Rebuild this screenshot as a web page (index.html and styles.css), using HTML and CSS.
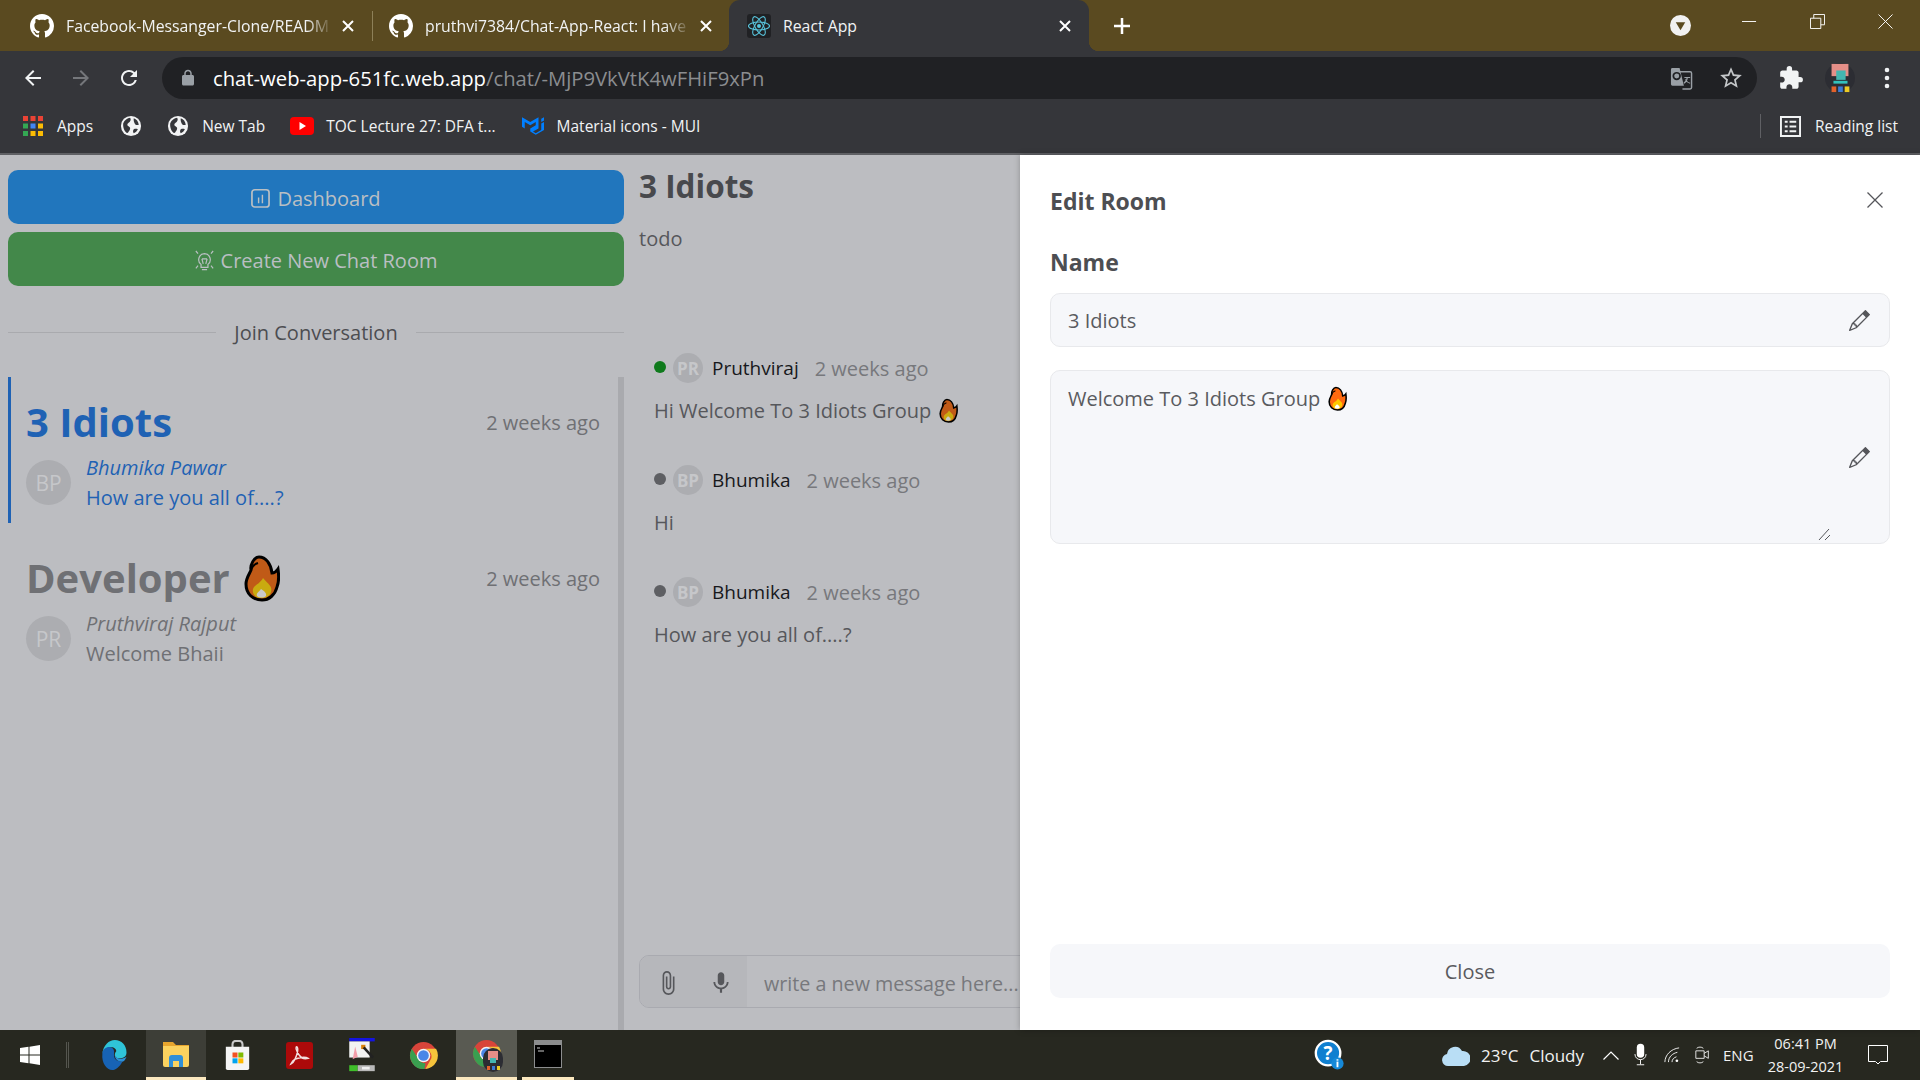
FILE: index.html
```html
<!DOCTYPE html>
<html lang="en">
<head>
  <meta charset="UTF-8" />
  <title>React App</title>
  <link rel="stylesheet" href="styles.css">
</head>
<body>
  <!-- shared icons -->
  <svg class="sprite" aria-hidden="true">
    <symbol id="i-github" viewBox="0 0 16 16"><path fill="currentColor" d="M8 0C3.58 0 0 3.58 0 8c0 3.54 2.29 6.53 5.47 7.59.4.07.55-.17.55-.38 0-.19-.01-.82-.01-1.49-2.01.37-2.53-.49-2.69-.94-.09-.23-.48-.94-.82-1.13-.28-.15-.68-.52-.01-.53.63-.01 1.08.58 1.23.82.72 1.21 1.87.87 2.33.66.07-.52.28-.87.51-1.07-1.78-.2-3.64-.89-3.64-3.95 0-.87.31-1.59.82-2.15-.08-.2-.36-1.02.08-2.12 0 0 .67-.21 2.2.82.64-.18 1.32-.27 2-.27.68 0 1.36.09 2 .27 1.53-1.04 2.2-.82 2.2-.82.44 1.1.16 1.92.08 2.12.51.56.82 1.27.82 2.15 0 3.07-1.87 3.75-3.65 3.95.29.25.54.73.54 1.48 0 1.07-.01 1.93-.01 2.2 0 .21.15.46.55.38A8.013 8.013 0 0016 8c0-4.42-3.58-8-8-8z"/></symbol>
    <symbol id="i-x" viewBox="0 0 14 14"><path d="M2 2l10 10M12 2L2 12" stroke="currentColor" stroke-width="2" fill="none"/></symbol>
    <symbol id="i-globe" viewBox="0 0 24 24"><circle cx="12" cy="12" r="11" fill="#f2f3f4"/><path fill="#35363a" d="M3.5 9C5 5.500 8 3.500 11 3c1 1.500 1 3-.5 4.500-1 1-2.500 1.500-2.500 3 0 1.500 2.500 2 3 3.500.3 1.500-.5 3-1.500 4-.5 1-1 2-2 1.500C5 18 3 14 3.500 9zM15 3.500c3 1 5 3.500 5.500 7-1.500 1-3 .5-4-.5-1-1.500-2-4-1.500-6.500zM15 15.500c1.500-.5 3-.5 4.500 0-1 2-2.500 3.500-4.500 4.500-1-1.500-1-3 0-4.500z"/></symbol>
    <symbol id="i-back" viewBox="0 0 24 24"><path fill="currentColor" d="M20 11H7.830l5.590-5.590L12 4l-8 8 8 8 1.410-1.410L7.830 13H20v-2z"/></symbol>
    <symbol id="i-pencil" viewBox="0 0 16 16"><path fill="currentColor" d="M12.146.146a.5.5 0 0 1 .708 0l3 3a.5.5 0 0 1 0 .708l-10 10a.5.5 0 0 1-.168.11l-5 2a.5.5 0 0 1-.65-.65l2-5a.5.5 0 0 1 .11-.168l10-10zM12.793 5.500 10.500 3.207 4 9.707V10h.5a.5.5 0 0 1 .5.5v.5h.5a.5.5 0 0 1 .5.5v.5h.293l6.500-6.500zm-9.761 5.175-.106.106-1.528 3.821 3.821-1.528.106-.106A.5.5 0 0 1 5 12.500V12h-.5a.5.5 0 0 1-.5-.5V11h-.5a.5.5 0 0 1-.468-.325z"/><path fill="currentColor" d="M12.500.5l3 3-2 2-3-3z"/></symbol>
    <symbol id="i-fire" viewBox="0 0 36 48">
      <path fill="var(--flame)" stroke="#000" stroke-width="3" d="M15 3C22 3 27 10 28 19C30 19 32 18 34 15C35 22 35 28 33 33C31 41 25 46 18 46C9 46 2 40 2 30C2 24 6 19 7 16C6 11 10 3 15 3Z"/>
      <path fill="none" stroke="#000" stroke-width="2" d="M7 16C8 12 11 10 14 9"/>
      <path fill="var(--flame-in)" d="M19 24C23 29 29 32 27 38C26 42 22 44 17 44C11 44 8 40 9 35C10 31 16 30 19 24Z"/>
      <path fill="var(--flame-core)" d="M17 35C20 37 23 39 22 42C20 44 15 44 13 42C12 39 15 38 17 35Z"/>
    </symbol>
    <symbol id="i-mic" viewBox="0 0 24 24"><path fill="currentColor" d="M12 14c1.660 0 3-1.340 3-3V5c0-1.660-1.340-3-3-3S9 3.340 9 5v6c0 1.660 1.340 3 3 3zm5.300-3c0 3-2.540 5.100-5.300 5.100S6.700 14 6.700 11H5c0 3.410 2.720 6.230 6 6.720V21h2v-3.280c3.280-.48 6-3.300 6-6.720h-1.700z"/></symbol>
    <symbol id="i-chrome" viewBox="0 0 30 30">
      <circle cx="15" cy="15" r="14" fill="#d8443a"/>
      <path fill="#f5c33b" d="M15 8h13a14 14 0 0 1-11 21l6-11a8 8 0 0 0-8-10z"/>
      <path fill="#3a9f50" d="M3 8l7 11a8 8 0 0 0 7 4l-1 6A14 14 0 0 1 3 8z"/>
      <circle cx="15" cy="15" r="7" fill="#f4f4f4"/><circle cx="15" cy="15" r="5.500" fill="#4a86e8"/>
    </symbol>
  </svg>

  <div class="screen">
    <div class="tabstrip">
      <div class="tab tab-first">
        <svg class="favicon"><use href="#i-github"/></svg>
        <span class="tab-title fade">Facebook-Messanger-Clone/READM</span>
        <svg class="tab-x"><use href="#i-x"/></svg>
      </div>
      <div class="tab-sep"></div>
      <div class="tab tab-second">
        <svg class="favicon"><use href="#i-github"/></svg>
        <span class="tab-title fade">pruthvi7384/Chat-App-React: I have</span>
        <svg class="tab-x"><use href="#i-x"/></svg>
      </div>
      <div class="tab tab-active">
        <svg class="react-icon" viewBox="0 0 24 24">
          <rect width="24" height="24" rx="3" fill="#202124"/>
          <g fill="none" stroke="#58c4dc" stroke-width="1.100">
            <ellipse cx="12" cy="12" rx="10.500" ry="4"/>
            <ellipse cx="12" cy="12" rx="10.500" ry="4" transform="rotate(60 12 12)"/>
            <ellipse cx="12" cy="12" rx="10.500" ry="4" transform="rotate(120 12 12)"/>
          </g>
          <circle cx="12" cy="12" r="2" fill="#58c4dc"/>
        </svg>
        <span class="tab-title">React App</span>
        <svg class="tab-x"><use href="#i-x"/></svg>
      </div>
      <svg class="new-tab" viewBox="0 0 18 18"><path d="M9 1v16M1 9h16" stroke="#fff" stroke-width="2.500"/></svg>
      <svg class="tab-search" viewBox="0 0 20 20"><circle cx="10" cy="10" r="10" fill="#f1f1f1"/><path d="M5.500 7h9L10 14.500z" fill="#5a4a20"/></svg>
      <div class="win-btns">
        <svg viewBox="0 0 16 16"><path d="M0 8h15" stroke="#fff"/></svg>
        <svg viewBox="0 0 16 16"><path d="M.5 4.500h11v11H.5zM4 4.500V.5h11.500v11h-4" fill="none" stroke="#fff"/></svg>
        <svg viewBox="0 0 16 16"><path d="M.5.5l15 15M15.500.5l-15 15" stroke="#fff"/></svg>
      </div>
    </div>

    <div class="toolbar">
      <svg class="nav nav-back"><use href="#i-back"/></svg>
      <svg class="nav nav-fwd"><use href="#i-back"/></svg>
      <svg class="nav nav-reload" viewBox="0 0 24 24"><path fill="currentColor" d="M17.650 6.350A7.960 7.960 0 0 0 12 4c-4.420 0-7.990 3.580-7.990 8s3.570 8 7.990 8c3.730 0 6.840-2.550 7.730-6h-2.080A5.990 5.990 0 0 1 12 18c-3.310 0-6-2.690-6-6s2.690-6 6-6c1.660 0 3.140.69 4.220 1.780L13 11h7V4l-2.350 2.350z"/></svg>
      <div class="omnibox">
        <svg class="lock" viewBox="0 0 24 24"><path fill="#9aa0a6" d="M18 8h-1V6c0-2.760-2.240-5-5-5S7 3.240 7 6v2H6c-1.100 0-2 .9-2 2v10c0 1.100.9 2 2 2h12c1.100 0 2-.9 2-2V10c0-1.100-.9-2-2-2zM9 6c0-1.660 1.340-3 3-3s3 1.340 3 3v2H9V6z"/></svg>
        <span class="url"><b>chat-web-app-651fc.web.app</b>/chat/-MjP9VkVtK4wFHiF9xPn</span>
        <svg class="translate" viewBox="0 0 24 24">
          <path fill="none" stroke="#9aa0a6" stroke-width="1.500" d="M9 5h12a1.500 1.500 0 0 1 1.500 1.500v15A1.500 1.500 0 0 1 21 23h-8"/>
          <path fill="#9aa0a6" d="M2.500 1H10l4.500 18.500H2.500A1.500 1.500 0 0 1 1 18V2.500A1.500 1.500 0 0 1 2.500 1z"/>
          <circle cx="7" cy="9.500" r="3.500" fill="none" stroke="#202124" stroke-width="1.800"/>
          <path d="M15 11h6M18 11c0 3-2 5-3.500 6M16 13c1 2 3 3.500 5 4" stroke="#9aa0a6" fill="none" stroke-width="1.200"/>
        </svg>
        <svg class="star" viewBox="0 0 24 24"><path fill="#c4c7c9" d="M22 9.240l-7.190-.62L12 2 9.190 8.630 2 9.240l5.460 4.730L5.820 21 12 17.270 18.180 21l-1.630-7.030L22 9.240zM12 15.400l-3.760 2.270 1-4.280-3.320-2.880 4.380-.38L12 6.100l1.710 4.040 4.380.38-3.320 2.880 1 4.280L12 15.400z"/></svg>
      </div>
      <svg class="puzzle" viewBox="0 0 24 24"><path fill="#f1f3f4" d="M20.500 11H19V7c0-1.100-.9-2-2-2h-4V3.500a2.500 2.500 0 0 0-5 0V5H4c-1.100 0-1.990.9-1.990 2v3.800H3.500c1.490 0 2.700 1.210 2.700 2.700s-1.210 2.700-2.700 2.700H2V20c0 1.100.9 2 2 2h3.800v-1.500c0-1.490 1.210-2.700 2.700-2.700 1.490 0 2.700 1.210 2.700 2.700V22H17c1.100 0 2-.9 2-2v-4h1.500a2.500 2.500 0 0 0 0-5z"/></svg>
      <svg class="profile" viewBox="0 0 32 32">
        <circle cx="16" cy="16" r="16" fill="#2c2d33"/>
        <rect x="7" y="1" width="18" height="13" fill="#e58f88"/>
        <rect x="12" y="8" width="10" height="10" fill="#43b6b0"/>
        <rect x="9" y="19" width="15" height="3" fill="#33c2bd"/>
        <rect x="7" y="25" width="5" height="6" fill="#e3622b"/>
        <rect x="14" y="25" width="5" height="6" fill="#3b7bd4"/>
        <rect x="21" y="25" width="5" height="6" fill="#eccb24"/>
      </svg>
      <svg class="kebab" viewBox="0 0 6 24"><circle cx="3" cy="4" r="2.300" fill="#f1f3f4"/><circle cx="3" cy="12" r="2.300" fill="#f1f3f4"/><circle cx="3" cy="20" r="2.300" fill="#f1f3f4"/></svg>
    </div>

    <div class="bookmarks">
      <div class="bm bm-apps">
        <svg viewBox="0 0 20 20">
          <rect width="5" height="5" fill="#ea4335"/><rect x="7.500" width="5" height="5" fill="#ea4335"/><rect x="15" width="5" height="5" fill="#ea4335"/>
          <rect y="7.500" width="5" height="5" fill="#34a853"/><rect x="7.500" y="7.500" width="5" height="5" fill="#4285f4"/><rect x="15" y="7.500" width="5" height="5" fill="#fbbc04"/>
          <rect y="15" width="5" height="5" fill="#34a853"/><rect x="7.500" y="15" width="5" height="5" fill="#fbbc04"/><rect x="15" y="15" width="5" height="5" fill="#fbbc04"/>
        </svg>
        <span>Apps</span>
      </div>
      <svg class="bm-globe"><use href="#i-globe"/></svg>
      <div class="bm bm-new"><svg class="bm-globe"><use href="#i-globe"/></svg><span>New Tab</span></div>
      <div class="bm bm-toc">
        <svg viewBox="0 0 24 18"><rect width="24" height="18" rx="4" fill="#f00"/><path d="M9.500 5l6.500 4-6.500 4z" fill="#fff"/></svg>
        <span>TOC Lecture 27: DFA t...</span>
      </div>
      <div class="bm bm-mui">
        <svg viewBox="0 0 24 24"><path fill="#007fff" d="M0 2.475v10.390l3 1.733V7.670l6 3.465 6-3.465v3.465l-6 3.463v3.464l6 3.463 9-5.196V7.670l-3 1.732v6.928l-6 3.464-3-1.732 6-3.464V2.475L9 7.671 0 2.475zM24 2.475l-3 1.732v3.464l3-1.732V2.475z"/></svg>
        <span>Material icons - MUI</span>
      </div>
      <div class="bm-sep"></div>
      <div class="bm bm-read">
        <svg viewBox="0 0 22 22"><path fill="none" stroke="#f1f3f4" stroke-width="2" d="M1 1h20v20H1z"/><path stroke="#f1f3f4" stroke-width="2" d="M5 6h3M10 6h7M5 11h3M10 11h7M5 16h3M10 16h7"/></svg>
        <span>Reading list</span>
      </div>
    </div>

    <div class="page">
      <aside class="sidebar">
        <button class="wide-btn btn-blue">
          <svg class="btn-icon" viewBox="0 0 20 20"><rect x="1" y="1" width="18" height="20" rx="3" transform="scale(1 .9)" fill="none" stroke="currentColor" stroke-width="1.800"/><path d="M8 9v6M12 6v9" stroke="currentColor" stroke-width="1.500"/></svg>
          Dashboard
        </button>
        <button class="wide-btn btn-green">
          <svg class="btn-icon" viewBox="0 0 22 24" fill="none" stroke="currentColor" stroke-width="1.400"><path d="M11 4a7 7 0 0 0-4 12.500V20h8v-3.500A7 7 0 0 0 11 4zM8 22.500h6M8 10l1.500 6M14 10l-1.500 6M8 10h6M1 1l2.500 3M21 1l-2.500 3M1 21l2.500-3M21 21l-2.500-3"/></svg>
          Create New Chat Room
        </button>

        <div class="divider"><span>Join Conversation</span></div>

        <div class="room-list">
          <div class="room room-active">
            <div class="room-top">
              <h2>3 Idiots</h2>
              <span class="when">2 weeks ago</span>
            </div>
            <div class="room-last">
              <div class="avatar">BP</div>
              <div class="last-text">
                <em>Bhumika Pawar</em>
                <p>How are you all of....?</p>
              </div>
            </div>
          </div>
          <div class="room">
            <div class="room-top">
              <h2>Developer <svg class="fire fire-lg"><use href="#i-fire"/></svg></h2>
              <span class="when">2 weeks ago</span>
            </div>
            <div class="room-last">
              <div class="avatar">PR</div>
              <div class="last-text">
                <em>Pruthviraj Rajput</em>
                <p>Welcome Bhaii</p>
              </div>
            </div>
          </div>
        </div>
      </aside>

      <section class="chat">
        <h1>3 Idiots</h1>
        <p class="topic">todo</p>

        <div class="messages">
          <div class="msg">
            <div class="msg-head">
              <i class="dot dot-on"></i>
              <div class="avatar avatar-sm">PR</div>
              <span class="who">Pruthviraj</span>
              <span class="ago">2 weeks ago</span>
            </div>
            <p class="msg-text">Hi Welcome To 3 Idiots Group <svg class="fire fire-sm"><use href="#i-fire"/></svg></p>
          </div>
          <div class="msg">
            <div class="msg-head">
              <i class="dot"></i>
              <div class="avatar avatar-sm">BP</div>
              <span class="who">Bhumika</span>
              <span class="ago">2 weeks ago</span>
            </div>
            <p class="msg-text">Hi</p>
          </div>
          <div class="msg">
            <div class="msg-head">
              <i class="dot"></i>
              <div class="avatar avatar-sm">BP</div>
              <span class="who">Bhumika</span>
              <span class="ago">2 weeks ago</span>
            </div>
            <p class="msg-text">How are you all of....?</p>
          </div>
        </div>

        <div class="composer">
          <div class="composer-tools">
            <svg viewBox="0 0 24 24"><path fill="currentColor" d="M16.500 6v11.500c0 2.210-1.790 4-4 4s-4-1.790-4-4V5c0-1.380 1.120-2.500 2.500-2.500s2.500 1.120 2.500 2.500v10.500c0 .55-.45 1-1 1s-1-.45-1-1V6H10v9.500c0 1.380 1.120 2.500 2.500 2.500s2.500-1.120 2.500-2.500V5c0-2.210-1.790-4-4-4S7 2.790 7 5v12.500c0 3.040 2.460 5.500 5.500 5.500s5.500-2.460 5.500-5.500V6h-1.500z"/></svg>
            <svg viewBox="0 0 24 24"><use href="#i-mic"/></svg>
          </div>
          <span class="placeholder">write a new message here...</span>
        </div>
      </section>

      <section class="drawer">
        <div class="drawer-head">
          <h3>Edit Room</h3>
          <svg class="drawer-x" viewBox="0 0 16 16"><path d="M.5.5l15 15M15.500.5l-15 15" stroke="#55565a" stroke-width="1.300"/></svg>
        </div>
        <h4>Name</h4>
        <div class="field">
          <span>3 Idiots</span>
          <svg class="pencil"><use href="#i-pencil"/></svg>
        </div>
        <div class="field field-area">
          <span>Welcome To 3 Idiots Group <svg class="fire fire-sm fire-lit"><use href="#i-fire"/></svg></span>
          <svg class="pencil"><use href="#i-pencil"/></svg>
          <svg class="grip" viewBox="0 0 13 11"><path d="M1 11L11 0M7 11l5-5" stroke="#55565a"/></svg>
        </div>
        <button class="close-btn">Close</button>
      </section>
    </div>

    <div class="taskbar">
      <svg class="tb-win" viewBox="0 0 20 20"><path fill="#fff" d="M0 3l8.500-1.200v7.700H0zM9.500 1.700L20 0v9.500H9.500zM0 10.500h8.500v7.700L0 17zM9.500 10.500H20V20L9.500 18.300z"/></svg>
      <div class="tb-sep"></div>
      <svg class="tb-edge" viewBox="0 0 30 36">
        <path fill="#2fc4d8" d="M1 17C2 6 9 0 16 0c8 0 14 6 14 15 0 5-4 7-8 7-3 0-6-1-6-4 0-5 3-3 1-7-3-5-15-2-16 6z"/>
        <path fill="#1763b5" d="M1 17c0-7 7-10 11-8 4 2 3 6 3 9 0 6 5 8 10 8-3 6-8 10-12 10C6 36 0 27 1 17z"/>
        <path fill="#2b8fd8" d="M16 18c2 5 8 6 14 2-1 3-3 6-5 6-5 0-9-3-9-8z"/>
      </svg>
      <div class="tb-app tb-open tb-lit">
        <svg viewBox="0 0 28 26"><path fill="#e7a52e" d="M1 1h10l3 3h13v4H1z"/><path fill="#fbd25f" d="M1 5h26v19a2 2 0 0 1-2 2H3a2 2 0 0 1-2-2z"/><path fill="#2f8fd8" d="M7 26V17a3 3 0 0 1 3-3h8a3 3 0 0 1 3 3v9h-4v-6h-6v6z"/></svg>
      </div>
      <svg class="tb-store" viewBox="0 0 30 36">
        <path fill="none" stroke="#c9c9c9" stroke-width="2.500" d="M9 10V5a4 4 0 0 1 4-4h4a4 4 0 0 1 4 4v5"/>
        <path fill="#f5f5f5" d="M1 8h28v26a2 2 0 0 1-2 2H3a2 2 0 0 1-2-2z"/>
        <rect x="9" y="15" width="6" height="6" fill="#f25022"/><rect x="16" y="15" width="6" height="6" fill="#7fba00"/>
        <rect x="9" y="22" width="6" height="6" fill="#00a4ef"/><rect x="16" y="22" width="6" height="6" fill="#ffb900"/>
      </svg>
      <svg class="tb-pdf" viewBox="0 0 28 28">
        <rect width="28" height="28" rx="3" fill="#ac0a0a"/>
        <path fill="none" stroke="#f2dede" stroke-width="1.500" d="M5 23c3-1 6-8 7-13 .5-3 0-5-1-5s-1 4 3 9c2 3 5 4 9 3-3-2-10-1-14 1-2 1-3 3-4 5z"/>
      </svg>
      <svg class="tb-tool" viewBox="0 0 30 40">
        <rect width="30" height="4" fill="#1414e0"/><rect y="4" width="24" height="19" fill="#f2f2f2"/>
        <path d="M7 10l3 12-6 3z" fill="#f29ca8"/><rect x="14" y="8" width="5" height="5" fill="#d8810a"/>
        <path d="M17 11l11 12" stroke="#222" stroke-width="3"/>
        <rect y="32" width="10" height="7" fill="#3fbf2a"/><rect x="10" y="32" width="20" height="7" fill="#b9b9b9"/><rect x="15" y="34" width="9" height="3" fill="#eee"/>
      </svg>
      <svg class="tb-chrome"><use href="#i-chrome"/></svg>
      <div class="tb-app tb-open tb-on">
        <svg class="tb-chrome"><use href="#i-chrome"/></svg>
        <svg class="tb-badge" viewBox="0 0 20 24"><rect width="20" height="24" rx="10" fill="#2c2d33"/><rect x="5" y="3" width="10" height="9" fill="#e58f88"/><rect x="7" y="10" width="6" height="5" fill="#43b6b0"/><rect x="4" y="18" width="3" height="4" fill="#e3622b"/><rect x="9" y="18" width="3" height="4" fill="#3b7bd4"/><rect x="14" y="18" width="3" height="4" fill="#eccb24"/></svg>
      </div>
      <div class="tb-app tb-open tb-term">
        <svg viewBox="0 0 28 28"><rect width="28" height="28" fill="#8c8d8e"/><rect x="1" y="5" width="26" height="22" fill="#000"/><path d="M3 8h3M4 11h6" stroke="#ccc"/></svg>
      </div>

      <svg class="tb-help" viewBox="0 0 30 34">
        <circle cx="14" cy="15" r="13" fill="#0f7fd0" stroke="#fff" stroke-width="2.500"/>
        <text x="14" y="22" class="help-q">?</text>
        <circle cx="24" cy="26" r="6.500" fill="#1689d8"/><rect x="23" y="24" width="2" height="6" fill="#fff"/><rect x="23" y="21.500" width="2" height="1.500" fill="#fff"/>
      </svg>
      <svg class="tb-cloud" viewBox="0 0 28 22"><path fill="#b9def5" d="M6 22a6 6 0 0 1-1-11.900A8 8 0 0 1 20 7a7.500 7.500 0 0 1 2 15z"/></svg>
      <span class="tb-temp">23°C</span>
      <span class="tb-sky">Cloudy</span>
      <svg class="tb-caret" viewBox="0 0 16 9"><path d="M.5 8.500L8 1l7.500 7.500" fill="none" stroke="#fff" stroke-width="1.200"/></svg>
      <svg class="tb-mic" viewBox="0 0 14 24"><rect x="3" y="0" width="8" height="15" rx="4" fill="#fff"/><path d="M1 11c0 8 12 8 12 0M7 17v5M3 22.500h8" fill="none" stroke="#fff"/></svg>
      <svg class="tb-wifi" viewBox="0 0 18 18" fill="none" stroke="#fff"><path d="M1 17C1 9 8 2 17 1M5 17c0-6 5-10 10-11M9 17c0-3 2-5 5-6"/><circle cx="14.500" cy="15.500" r="1.500" fill="#fff" stroke="none"/></svg>
      <svg class="tb-meet" viewBox="0 0 18 22" fill="none" stroke="#fff"><path d="M1 6h10v9H1zM11 9l5-3v9l-5-3M2 3c2-2 6-2 8 0M2 19c2 2 6 2 8 0"/></svg>
      <span class="tb-lang">ENG</span>
      <div class="tb-clock"><span>06:41 PM</span><span>28-09-2021</span></div>
      <svg class="tb-note" viewBox="0 0 20 20"><path d="M.5.5h19v16h-7L10 19l-2.500-2.500h-7z" fill="none" stroke="#fff"/></svg>
    </div>
  </div>
</body>
</html>
```

FILE: styles.css
```css
* {
  box-sizing: border-box;
}
body {
  margin: 0;
  font-family: "Open Sans", "Noto Sans", sans-serif;
  background: #bcbdc1;
}
h1, h2, h3, h4, p {
  margin: 0;
}
.sprite {
  position: absolute;
  width: 0;
  height: 0;
}
.screen {
  width: 1920px;
  height: 1080px;
  display: flex;
  flex-direction: column;
  overflow: hidden;
}

/* browser chrome */
.tabstrip {
  height: 51px;
  flex: none;
  display: flex;
  align-items: center;
  background: #5a4a20;
  color: #fff;
}
.tab {
  display: flex;
  align-items: center;
  height: 51px;
}
.tab-first {
  width: 372px;
  padding: 0 17px 0 30px;
}
.tab-second {
  width: 354px;
  padding: 0 14px 0 16px;
}
.tab-sep {
  width: 1px;
  height: 30px;
  background: #8d8058;
}
.tab-active {
  width: 360px;
  margin-left: 2px;
  padding: 0 17px 0 18px;
  background: #35363a;
  border-radius: 11px 11px 0 0;
  position: relative;
}
.tab-active::before,
.tab-active::after {
  content: "";
  position: absolute;
  bottom: 0;
  width: 10px;
  height: 10px;
}
.tab-active::before {
  left: -10px;
  background: radial-gradient(circle at 0 0, transparent 10px, #35363a 10.500px);
}
.tab-active::after {
  right: -10px;
  background: radial-gradient(circle at 100% 0, transparent 10px, #35363a 10.500px);
}
.favicon {
  width: 24px;
  height: 24px;
  flex: none;
}
.react-icon {
  width: 24px;
  height: 24px;
  flex: none;
}
.tab-title {
  flex: 1;
  margin-left: 12px;
  font-size: 15.800px;
  white-space: nowrap;
  color: #f1f3f4;
}
.fade {
  -webkit-mask-image: linear-gradient(to right, #000 90%, transparent);
  mask-image: linear-gradient(to right, #000 90%, transparent);
}
.tab-x {
  width: 14px;
  height: 14px;
  flex: none;
  margin-left: 8px;
}
.new-tab {
  width: 18px;
  height: 18px;
  margin-left: 24px;
}
.tab-search {
  width: 21px;
  height: 21px;
  margin-left: 539px;
}
.win-btns {
  display: flex;
  gap: 53px;
  margin-left: 51px;
  margin-top: -8px;
}
.win-btns svg {
  width: 15px;
  height: 15px;
}
.toolbar {
  height: 48px;
  flex: none;
  display: flex;
  align-items: flex-end;
  background: #35363a;
  color: #f1f3f4;
}
.nav {
  width: 24px;
  height: 24px;
  margin-bottom: 9px;
  flex: none;
}
.nav-back {
  margin-left: 21px;
}
.nav-fwd {
  margin-left: 24px;
  transform: scaleX(-1);
  color: #75777b;
}
.nav-reload {
  margin-left: 24px;
}
.omnibox {
  width: 1595px;
  height: 42px;
  margin-left: 21px;
  display: flex;
  align-items: center;
  background: #202124;
  border-radius: 21px;
  padding: 0 13px 0 17px;
}
.lock {
  width: 18px;
  height: 18px;
}
.url {
  flex: 1;
  margin-left: 16px;
  font-size: 20.250px;
  color: #8b8d90;
  white-space: nowrap;
}
.url b {
  font-weight: 400;
  color: #fff;
}
.translate {
  width: 23px;
  height: 23px;
}
.star {
  width: 26px;
  height: 26px;
  margin-left: 25px;
}
.puzzle {
  width: 26px;
  height: 26px;
  margin: 0 0 8px 21px;
}
.profile {
  width: 30px;
  height: 32px;
  margin: 0 0 5px 21px;
}
.kebab {
  width: 6px;
  height: 24px;
  margin: 0 0 9px 29px;
}
.bookmarks {
  height: 56px;
  flex: none;
  display: flex;
  align-items: center;
  background: #35363a;
  border-bottom: 2px solid #5f6064;
  color: #f1f3f4;
  font-size: 15.500px;
}
.bm {
  display: flex;
  align-items: center;
  white-space: nowrap;
}
.bm-apps {
  margin-left: 23px;
  gap: 14px;
}
.bm-apps svg {
  width: 20px;
  height: 20px;
}
.bm-globe {
  width: 22px;
  height: 22px;
  flex: none;
}
.bookmarks > .bm-globe {
  margin-left: 27px;
}
.bm-new {
  margin-left: 25px;
  gap: 13px;
}
.bm-toc {
  margin-left: 25px;
  gap: 12px;
}
.bm-toc svg {
  width: 24px;
  height: 18px;
}
.bm-mui {
  margin-left: 26px;
  gap: 13px;
}
.bm-mui svg {
  width: 22px;
  height: 22px;
}
.bm-sep {
  width: 1px;
  height: 24px;
  background: #5f6064;
  margin-left: auto;
}
.bm-read {
  margin: 0 22px 0 19px;
  gap: 14px;
}
.bm-read svg {
  width: 21px;
  height: 21px;
}

/* page under the drawer, all dimmed */
.page {
  flex: 1;
  min-height: 0;
  display: flex;
}
.sidebar {
  width: 624px;
  flex: none;
  padding: 15px 0 0 8px;
  display: flex;
  flex-direction: column;
}
.wide-btn {
  height: 54px;
  flex: none;
  display: flex;
  align-items: center;
  justify-content: center;
  gap: 7px;
  border: 0;
  border-radius: 10px;
  padding: 2px 0 0;
  font-family: inherit;
  font-size: 20px;
  color: #babfc3;
}
.btn-blue {
  background: #2176bd;
}
.btn-green {
  background: #43884a;
  margin-top: 8px;
}
.btn-icon {
  width: 19px;
  height: 21px;
}
.divider {
  display: flex;
  align-items: center;
  gap: 18px;
  margin-top: 25px;
  height: 42px;
  font-size: 20px;
  color: #4c4d51;
}
.divider::before,
.divider::after {
  content: "";
  flex: 1;
  height: 1px;
  background: #a9aaae;
}
.room-list {
  flex: 1;
  margin-top: 24px;
  border-right: 6px solid #a9aaae;
  display: flex;
  flex-direction: column;
  gap: 10px;
}
.room {
  height: 146px;
  padding: 17px 18px 0 15px;
  border-left: 3px solid transparent;
  color: #6f7074;
}
.room-active {
  border-left-color: #1f62b4;
  color: #1f62b4;
}
.room-top {
  display: flex;
  align-items: center;
  justify-content: space-between;
  height: 56px;
}
.room h2 {
  font-size: 40px;
  font-weight: 700;
  line-height: 56px;
  display: flex;
  align-items: center;
  gap: 14px;
}
.when {
  font-size: 20px;
  color: #6f7074;
}
.room-last {
  display: flex;
  align-items: center;
  gap: 15px;
  height: 45px;
  margin-top: 10px;
}
.avatar {
  width: 45px;
  height: 45px;
  flex: none;
  border-radius: 50%;
  background: #acadb1;
  color: #c6c7ca;
  font-size: 21px;
  display: flex;
  align-items: center;
  justify-content: center;
}
.last-text {
  font-size: 20px;
  line-height: 30px;
  margin-top: 1px;
}
.last-text em,
.last-text p {
  display: block;
}
.fire {
  --flame: #c05a17;
  --flame-in: #c9aa10;
  --flame-core: #c9c9c9;
  flex: none;
}
.fire-lit {
  --flame: #ff6a10;
  --flame-in: #ffc800;
  --flame-core: #fff;
}
.fire-lg {
  width: 36px;
  height: 48px;
}
.fire-sm {
  width: 19px;
  height: 25px;
  vertical-align: -5px;
  margin-left: 3px;
}

.chat {
  width: 396px;
  flex: none;
  padding: 9px 0 22px 15px;
  display: flex;
  flex-direction: column;
  overflow: hidden;
  color: #56575b;
}
.chat h1 {
  font-size: 31.500px;
  font-weight: 700;
  line-height: 44px;
  color: #48494d;
}
.topic {
  font-size: 20px;
  line-height: 28px;
  margin-top: 17px;
}
.messages {
  margin-top: 100px;
  padding-left: 15px;
  display: flex;
  flex-direction: column;
  gap: 40px;
}
.msg-head {
  display: flex;
  align-items: center;
  height: 30px;
  font-size: 20px;
}
.dot {
  width: 12px;
  height: 12px;
  border-radius: 50%;
  background: #5e5f63;
  margin: -2px 7px 0 0;
}
.dot-on {
  background: #0f7a1c;
}
.avatar-sm {
  width: 30px;
  height: 30px;
  font-size: 17px;
  font-weight: 700;
}
.who {
  margin-left: 9px;
  font-size: 19px;
  color: #17181b;
}
.ago {
  margin-left: 16px;
  color: #77787c;
}
.msg-text {
  margin: 14px 0 0 0;
  font-size: 20px;
  line-height: 28px;
  white-space: nowrap;
}
.composer {
  margin-top: auto;
  width: 497px;
  height: 53px;
  flex: none;
  display: flex;
  align-items: center;
  border: 1px solid #a9aab0;
  border-radius: 10px;
  overflow: hidden;
}
.composer-tools {
  width: 107px;
  height: 100%;
  flex: none;
  background: #b6b7bb;
  display: flex;
  align-items: center;
  gap: 27px;
  padding: 2px 0 0 15px;
  color: #56575b;
}
.composer-tools svg {
  width: 26px;
  height: 26px;
  color: #56575b;
}
.placeholder {
  margin-left: 17px;
  padding-top: 3px;
  font-size: 19.700px;
  color: #77787c;
  white-space: nowrap;
}

.drawer {
  flex: 1;
  min-width: 0;
  background: #fff;
  box-shadow: 0 0 6px rgba(0, 0, 0, 0.25);
  padding: 0 30px 32px;
  display: flex;
  flex-direction: column;
  color: #5a5b5f;
  position: relative;
}
.drawer-head {
  display: flex;
  align-items: center;
  justify-content: space-between;
  height: 36px;
  margin-top: 28px;
}
.drawer h3,
.drawer h4 {
  font-size: 23px;
  font-weight: 700;
  color: #4d4e52;
}
.drawer-x {
  width: 16px;
  height: 16px;
  margin: -2px 7px 0 0;
}
.drawer h4 {
  margin-top: 27px;
  line-height: 32px;
}
.field {
  height: 54px;
  margin-top: 15px;
  padding: 0 16px 0 17px;
  display: flex;
  align-items: center;
  justify-content: space-between;
  background: #f6f7fa;
  border: 1px solid #e8e9ec;
  border-radius: 10px;
  font-size: 20px;
}
.field-area {
  height: 174px;
  margin-top: 23px;
  position: relative;
}
.field-area > span {
  align-self: flex-start;
  margin-top: 14px;
}
.pencil {
  width: 21px;
  height: 21px;
  color: #55565a;
  flex: none;
  margin-right: 3px;
}
.grip {
  position: absolute;
  right: 58px;
  bottom: 3px;
  width: 13px;
  height: 11px;
}
.close-btn {
  margin-top: auto;
  height: 54px;
  flex: none;
  border: 0;
  border-radius: 10px;
  background: #f6f7fa;
  font-family: inherit;
  font-size: 20px;
  color: #5a5b5f;
}

/* windows taskbar */
.taskbar {
  height: 50px;
  flex: none;
  display: flex;
  align-items: center;
  background: #272820;
  color: #f2f2f2;
  font-size: 17px;
}
.tb-win {
  width: 20px;
  height: 20px;
  margin-left: 20px;
  flex: none;
}
.tb-sep {
  width: 3px;
  height: 26px;
  margin-left: 26px;
  border-left: 1px solid #55564f;
  border-right: 1px solid #55564f;
}
.tb-edge {
  width: 30px;
  height: 30px;
  margin-left: 30px;
  flex: none;
}
.tb-app {
  height: 50px;
  display: flex;
  align-items: center;
  justify-content: center;
  position: relative;
  flex: none;
}
.tb-open {
  border-bottom: 3px solid #fbe8bf;
}
.tb-lit {
  width: 60px;
  margin-left: 17px;
  background: #3d3e37;
}
.tb-lit svg {
  width: 28px;
  height: 26px;
}
.tb-store {
  width: 29px;
  height: 30px;
  margin-left: 17px;
  flex: none;
}
.tb-pdf {
  width: 27px;
  height: 27px;
  margin-left: 34px;
  flex: none;
}
.tb-tool {
  width: 30px;
  height: 34px;
  margin-left: 34px;
  flex: none;
}
.tb-chrome {
  width: 29px;
  height: 29px;
  flex: none;
}
.taskbar > .tb-chrome {
  margin-left: 32px;
}
.tb-on {
  width: 61px;
  margin-left: 18px;
  background: #595a52;
}
.tb-badge {
  position: absolute;
  left: 27px;
  top: 18px;
  width: 20px;
  height: 24px;
}
.tb-term {
  width: 52px;
  margin-left: 5px;
}
.tb-term svg {
  width: 28px;
  height: 28px;
}
.tb-help {
  width: 30px;
  height: 32px;
  margin-left: 740px;
  flex: none;
}
.help-q {
  fill: #fff;
  font-size: 20px;
  font-weight: 700;
  text-anchor: middle;
}
.tb-cloud {
  width: 28px;
  height: 22px;
  margin-left: 98px;
  flex: none;
}
.tb-temp {
  margin-left: 11px;
}
.tb-sky {
  margin-left: 11px;
}
.tb-caret {
  width: 16px;
  height: 9px;
  margin-left: 19px;
  flex: none;
}
.tb-mic {
  width: 13px;
  height: 24px;
  margin-left: 15px;
  flex: none;
}
.tb-wifi {
  width: 16px;
  height: 18px;
  margin-left: 17px;
  flex: none;
}
.tb-meet {
  width: 15px;
  height: 22px;
  margin-left: 15px;
  flex: none;
}
.tb-lang {
  margin-left: 13px;
  font-size: 15px;
}
.tb-clock {
  width: 92px;
  margin-left: 6px;
  display: flex;
  flex-direction: column;
  align-items: center;
  font-size: 14.500px;
  line-height: 23px;
}
.tb-note {
  width: 20px;
  height: 20px;
  margin-left: 16px;
  flex: none;
}
```
